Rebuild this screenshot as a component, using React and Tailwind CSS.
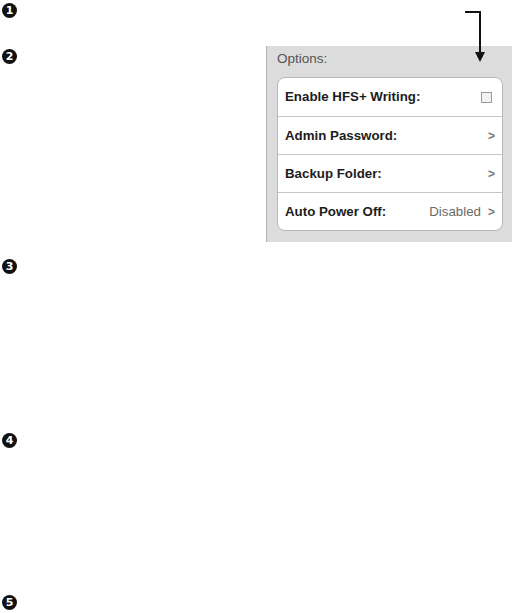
const rows = [
  { label: "Enable HFS+ Writing:", kind: "check" },
  { label: "Admin Password:", kind: "link" },
  { label: "Backup Folder:", kind: "link" },
  { label: "Auto Power Off:", kind: "link", value: "Disabled" },
];

function Marker({ n, className = "" }) {
  return (
    <span
      className={`flex h-[15px] w-[15px] items-center justify-center rounded-full bg-[#111] text-[11px] leading-none font-bold text-white font-['DejaVu_Sans',sans-serif] ${className}`}
    >
      {n}
    </span>
  );
}

function OptionsPanel() {
  return (
    <div className="h-[196px] w-[246px] border-l border-[#b4b4b4] bg-[#dcdcdc] pl-[10px] pr-[9px] pt-[5px] font-['Liberation_Sans',Arial,sans-serif]">
      <p className="text-[13.5px] leading-[16px] text-[#555]">Options:</p>
      <div className="mt-[10px] overflow-hidden rounded-[8px] border border-[#b9b9b9] bg-white">
        {rows.map((row, i) => (
          <div
            key={row.label}
            className={`flex h-[38px] items-center justify-between pl-[7px] pr-[7px] ${i > 0 ? "border-t border-[#c4c4c4]" : ""}`}
          >
            <span className="text-[13.3px] font-bold text-[#1c1c1c]">{row.label}</span>
            {row.kind === "check" ? (
              <span className="mr-[3px] block h-[11px] w-[11px] border border-[#9a9a9a] bg-[#f2f2f2]" />
            ) : (
              <span className="flex items-center gap-[7px] text-[13.3px] text-[#6a6a6a]">
                {row.value && <span>{row.value}</span>}
                <span className="text-[12px] font-bold text-[#777]">&gt;</span>
              </span>
            )}
          </div>
        ))}
      </div>
    </div>
  );
}

export default function App() {
  return (
    <div className="relative h-[613px] w-[512px] overflow-hidden bg-white pl-[2px]">
      <Marker n="1" className="mt-[3px]" />
      <div className="mt-[28px] flex justify-between">
        <Marker n="2" className="mt-[3px]" />
        <OptionsPanel />
      </div>
      <Marker n="3" className="mt-[17px]" />
      <Marker n="4" className="mt-[159px]" />
      <Marker n="5" className="mt-[147px]" />

      {/* callout arrow pointing at the checkbox */}
      <svg className="absolute left-[460px] top-[8px]" width="30" height="58" viewBox="0 0 30 58">
        <path d="M5 4 H20 V46" fill="none" stroke="#111" strokeWidth="2" />
        <path d="M15 44 L25 44 L20 54 Z" fill="#111" />
      </svg>
    </div>
  );
}
